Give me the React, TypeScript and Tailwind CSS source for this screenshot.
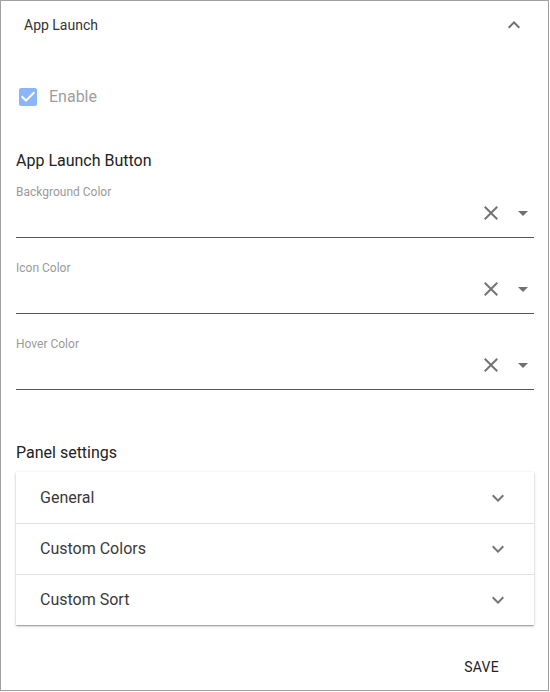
import React from "react";

const ChevronUp = () => (
  <svg viewBox="0 0 24 24" className="size-6 fill-[#6f6f6f]">
    <path d="M12 8l-6 6 1.41 1.41L12 10.83l4.59 4.58L18 14z" />
  </svg>
);

const ChevronDown = () => (
  <svg viewBox="0 0 24 24" className="size-6 fill-[#757575]">
    <path d="M16.59 8.59L12 13.17 7.41 8.59 6 10l6 6 6-6z" />
  </svg>
);

const ColorField = ({ label, first }: { label: string; first?: boolean }) => (
  <div className={first ? "mt-[11px]" : "mt-[22px]"}>
    <div className="h-4 text-xs leading-4 text-[#9a9a9a]">{label}</div>
    <div className="flex h-[26px] items-center justify-end">
      {/* clear */}
      <svg viewBox="0 0 24 24" className="size-6 fill-[#757575]">
        <path d="M19 6.41L17.59 5 12 10.59 6.41 5 5 6.41 10.59 12 5 17.59 6.41 19 12 13.41 17.59 19 19 17.59 13.41 12z" />
      </svg>
      {/* dropdown caret */}
      <svg viewBox="0 0 24 24" className="ml-2 mr-[-1px] size-6 fill-[#6f6f6f]">
        <path d="M7 10l5 5 5-5z" />
      </svg>
    </div>
    <div className="mt-[11px] h-px bg-[#555]" />
  </div>
);

const PanelRow = ({ title, divider }: { title: string; divider?: boolean }) => (
  <div
    className={
      "flex h-[51px] items-center justify-between pl-6 pr-6 " +
      (divider ? "border-t border-[#e0e0e0]" : "")
    }
  >
    <span className="text-base leading-6 text-[#3a3a3a]">{title}</span>
    <ChevronDown />
  </div>
);

export default function App() {
  return (
    <div
      className="flex h-[691px] w-[549px] flex-col border border-[#a0a0a0] bg-white"
      style={{ fontFamily: "Roboto, 'Liberation Sans', sans-serif" }}
    >
      {/* header */}
      <div className="flex h-[47px] items-center justify-between pl-[23px] pr-[22px]">
        <span className="text-sm text-[#333]">App Launch</span>
        <ChevronUp />
      </div>

      <div className="flex flex-col pl-[15px] pr-[14px]">
        {/* enable */}
        <div className="mt-[37px] flex h-6 items-center">
          <svg viewBox="0 0 24 24" className="size-6 fill-[#8ab6f9]">
            <path d="M19 3H5c-1.11 0-2 .9-2 2v14c0 1.1.89 2 2 2h14c1.11 0 2-.9 2-2V5c0-1.1-.89-2-2-2zm-9 14l-5-5 1.41-1.41L10 14.17l7.59-7.59L19 8l-9 9z" />
          </svg>
          <span className="ml-[9px] text-base leading-6 text-[#9e9e9e]">Enable</span>
        </div>

        <div className="mt-[40px] text-base leading-6 text-[#222]">App Launch Button</div>
        <ColorField label="Background Color" first />
        <ColorField label="Icon Color" />
        <ColorField label="Hover Color" />

        <div className="mt-[51px] text-base leading-6 text-[#222]">Panel settings</div>
        <div className="mt-[7px] flex flex-col bg-white shadow-[0_1px_3px_rgba(0,0,0,0.2),0_1px_1px_rgba(0,0,0,0.14),0_2px_1px_-1px_rgba(0,0,0,0.12)]">
          <PanelRow title="General" />
          <PanelRow title="Custom Colors" divider />
          <PanelRow title="Custom Sort" divider />
        </div>

        <div className="mt-8 flex justify-end pr-[35px]">
          <span className="text-sm uppercase leading-5 tracking-[0.02em] text-[#222]">
            Save
          </span>
        </div>
      </div>
    </div>
  );
}
